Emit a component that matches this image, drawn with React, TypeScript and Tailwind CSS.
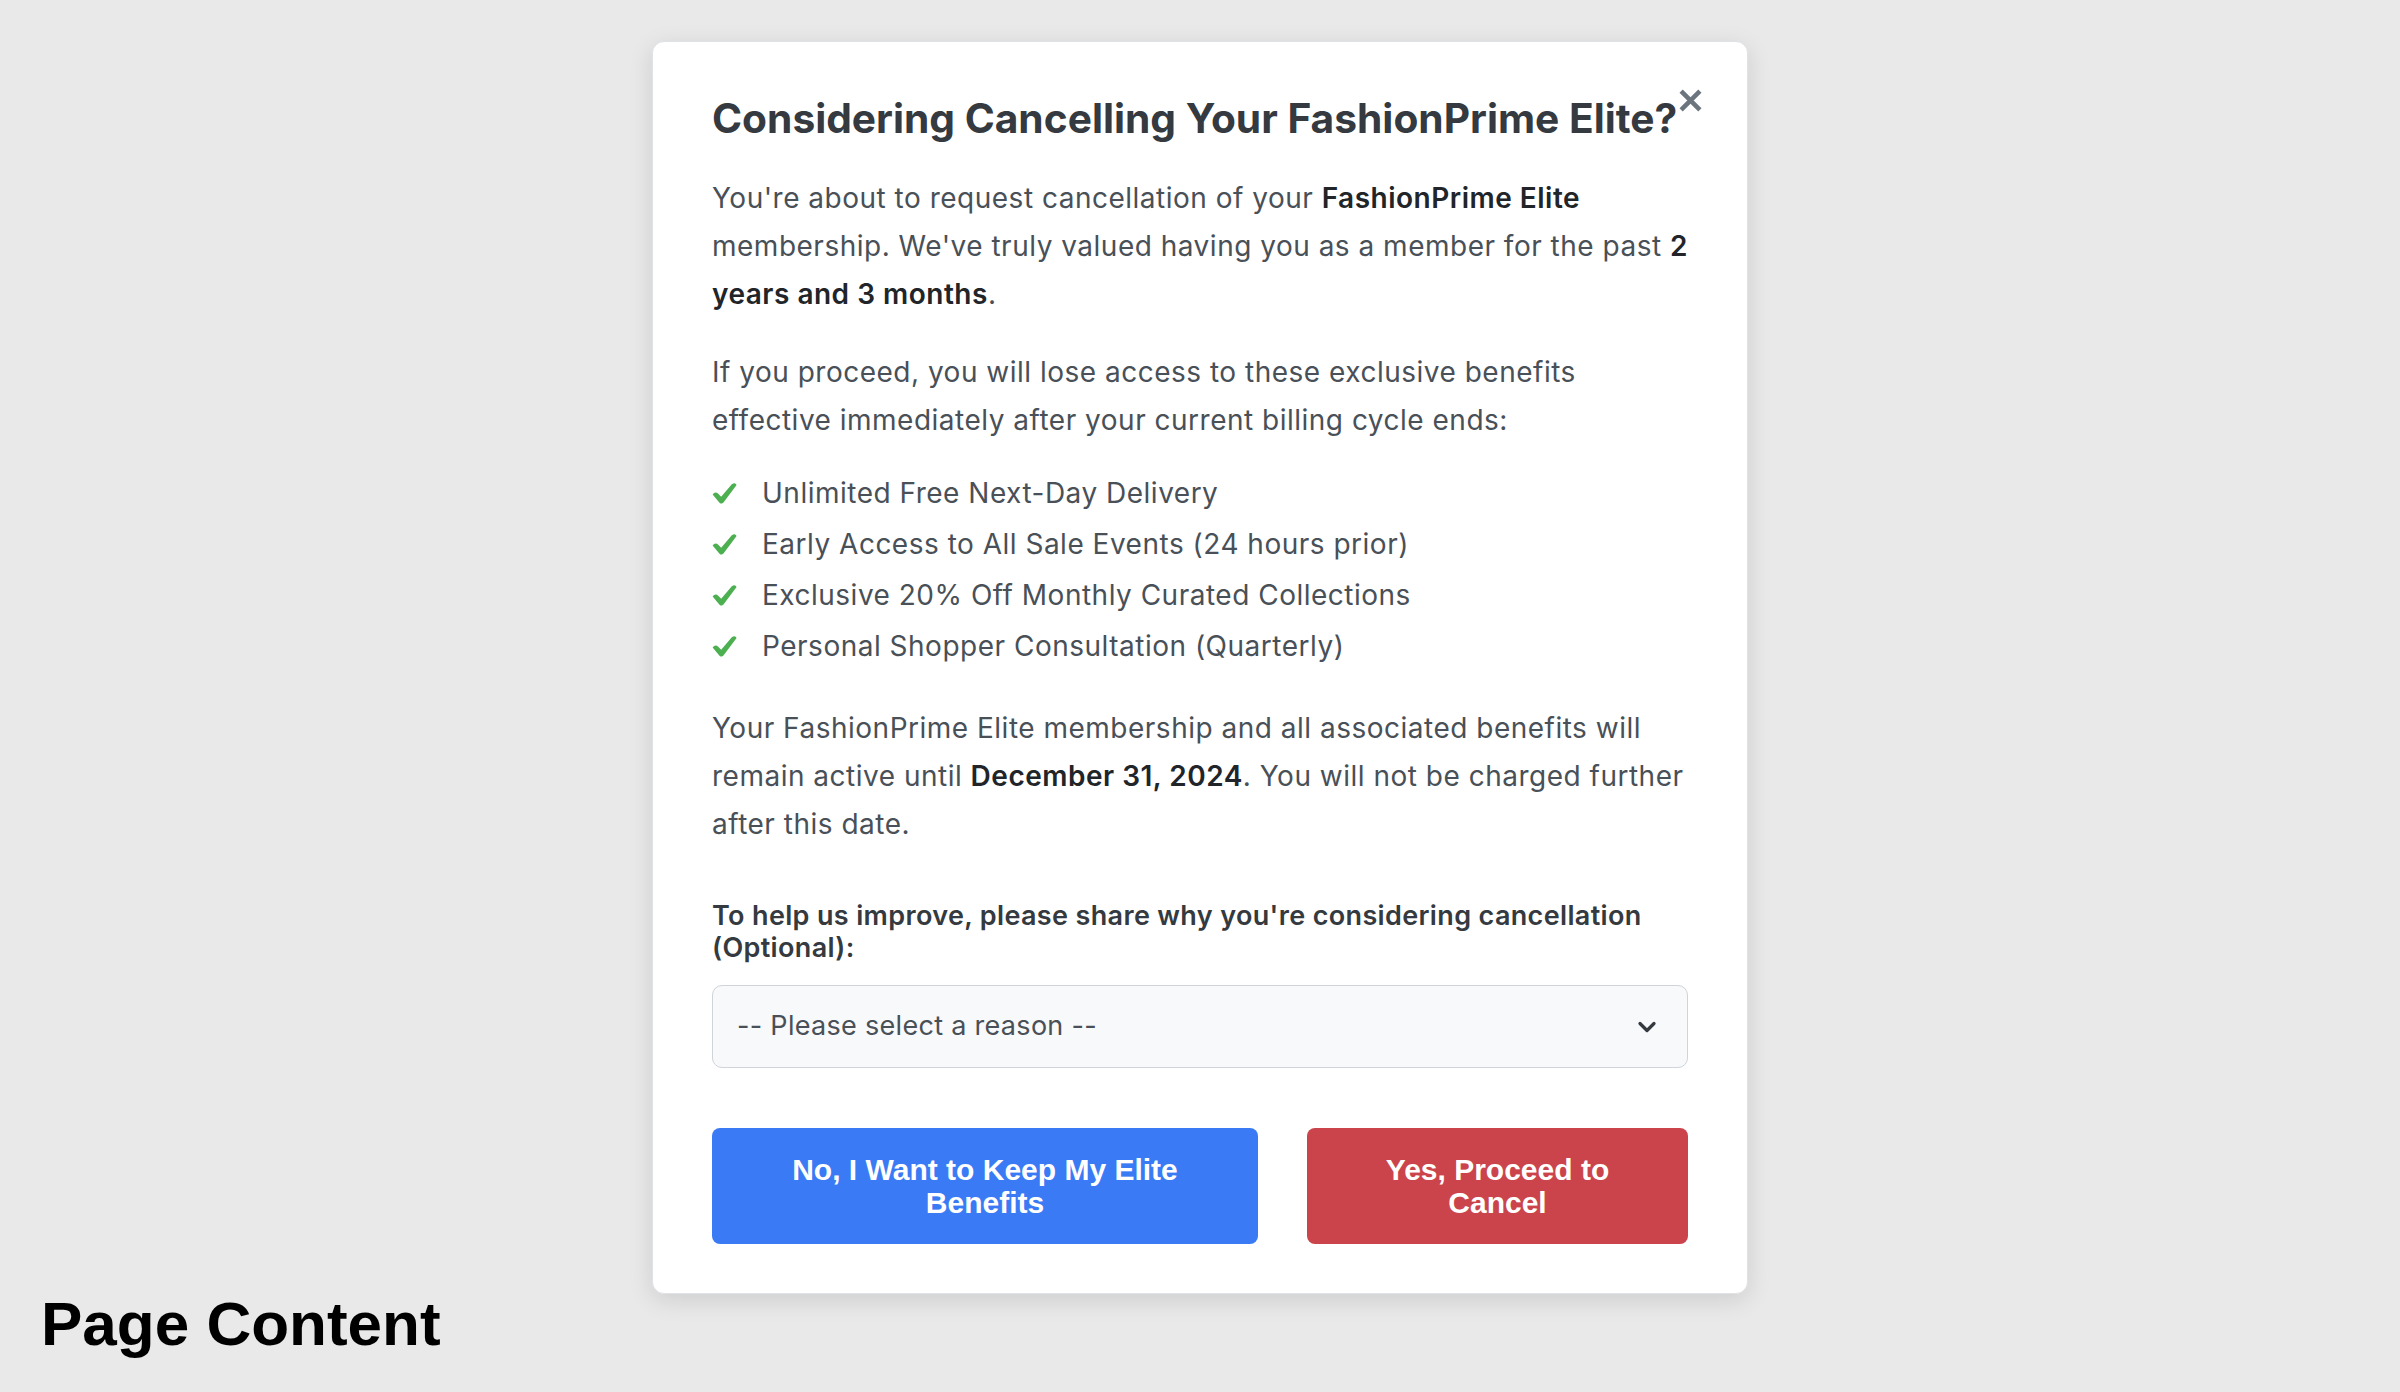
import { ChevronDown } from "lucide-react";

const benefits = [
  "Unlimited Free Next-Day Delivery",
  "Early Access to All Sale Events (24 hours prior)",
  "Exclusive 20% Off Monthly Curated Collections",
  "Personal Shopper Consultation (Quarterly)",
];

function Check() {
  return (
    <svg viewBox="0 0 24 20" className="h-[21px] w-[25px] shrink-0" fill="#4caf50">
      <path d="M0.6 11 Q3 7.6 6 10.2 L8.8 13.2 L19 1.2 Q22.2 -1 23.6 1.8 L11 18.6 Q9.2 20.6 7.2 18.8 Z" />
    </svg>
  );
}

export default function App() {
  return (
    <div className="relative flex h-[1392px] w-full flex-col justify-end bg-[#e9e9e9] px-[41px] pb-[33px] font-['Liberation_Sans',Arial,sans-serif]">
      <h1 className="text-[62px] font-bold leading-[71px] text-black">Page Content</h1>

      {/* cancel modal */}
      <div className="absolute inset-0 flex items-start justify-center pt-[41px]">
        <div className="relative w-[1096px] rounded-[12px] border border-[#dfe2e6] bg-white px-[59px] pb-[49px] pt-[53px] font-['Inter',sans-serif] shadow-[0_6px_24px_rgba(0,0,0,0.12)]">
          <button type="button" className="absolute right-[44px] top-[46px] p-0 text-[#6c757d]">
            <svg viewBox="0 0 24 24" className="h-[25px] w-[25px]" fill="none">
              <path d="M3 3 L21 21 M21 3 L3 21" stroke="currentColor" strokeWidth="4.4" strokeLinecap="butt" />
            </svg>
          </button>

          <h2 className="text-[40.7px] font-bold leading-[48px] text-[#343a40]">
            Considering Cancelling Your FashionPrime Elite?
          </h2>

          <div className="text-[28px] leading-[48px] tracking-[0.5px] text-[#495057]">
            <p className="mt-[31px]">
              You're about to request cancellation of your <strong className="font-semibold text-[#212529]">FashionPrime Elite</strong>{" "}
              membership. We've truly valued having you as a member for the past{" "}
              <strong className="font-semibold text-[#212529]">2 years and 3 months</strong>.
            </p>
            <p className="mt-[30px]">
              If you proceed, you will lose access to these exclusive benefits effective immediately after your current
              billing cycle ends:
            </p>
            <ul className="mt-[25px] flex flex-col gap-[3px]">
              {benefits.map((b) => (
                <li key={b} className="flex items-center gap-[25px]">
                  <Check />
                  <span>{b}</span>
                </li>
              ))}
            </ul>
            <p className="mt-[34px]">
              Your FashionPrime Elite membership and all associated benefits will remain active until{" "}
              <strong className="font-semibold text-[#212529]">December 31, 2024</strong>. You will not be charged further
              after this date.
            </p>
          </div>

          <label className="mt-[52px] block text-[27px] font-semibold leading-[32px] tracking-[0.35px] text-[#343a40]">
            To help us improve, please share why you're considering cancellation (Optional):
          </label>
          <div className="relative mt-[21px]">
            <select className="h-[83px] w-full appearance-none rounded-[10px] border border-[#ced4da] bg-[#f8f9fa] pl-[24px] text-[27px] tracking-[0.3px] text-[#495057] outline-none">
              <option>-- Please select a reason --</option>
              <option>Too expensive</option>
              <option>Not using the benefits enough</option>
              <option>Other</option>
            </select>
            <ChevronDown className="pointer-events-none absolute right-[27px] top-1/2 h-[28px] w-[28px] -translate-y-1/2 text-[#343a40]" strokeWidth={2.8} />
          </div>

          <div className="mt-[60px] flex gap-[49px] font-['Liberation_Sans',Arial,sans-serif]">
            <button type="button" className="h-[116px] w-[546px] rounded-[8px] bg-[#3a7bf5] px-[30px] text-[30px] font-bold leading-[33px] text-white">
              No, I Want to Keep My Elite Benefits
            </button>
            <button type="button" className="h-[116px] flex-1 rounded-[8px] bg-[#cb444b] px-[30px] text-[30px] font-bold leading-[33px] text-white">
              Yes, Proceed to Cancel
            </button>
          </div>
        </div>
      </div>
    </div>
  );
}
